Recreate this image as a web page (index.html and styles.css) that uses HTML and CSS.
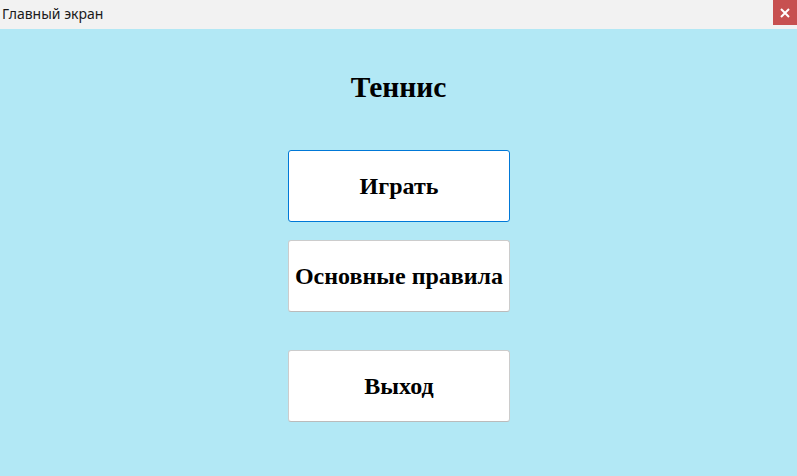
FILE: index.html
```html
<!DOCTYPE html>
<html lang="ru">
<head>
<meta charset="utf-8">
<title>Главный экран</title>
<link rel="stylesheet" href="styles.css">
</head>
<body>
<div class="window">
  <header class="titlebar">
    <span class="title">Главный экран</span>
    <button class="close" aria-label="Закрыть">
      <svg width="10" height="10" viewBox="0 0 10 10"><path d="M1 1L9 9M9 1L1 9" stroke="#fff" stroke-width="2"/></svg>
    </button>
  </header>
  <main class="content">
    <h1 class="heading">Теннис</h1>
    <button class="menu-btn focused">Играть</button>
    <button class="menu-btn second">Основные правила</button>
    <button class="menu-btn third">Выход</button>
  </main>
</div>
</body>
</html>
```
FILE: styles.css
```css
html, body {
  margin: 0;
  padding: 0;
  height: 100%;
}
.window {
  display: flex;
  flex-direction: column;
  height: 476px;
  width: 797px;
  overflow: hidden;
}
.titlebar {
  height: 29px;
  background: #f2f2f2;
  display: flex;
  align-items: flex-start;
  justify-content: space-between;
  flex: none;
}
.title {
  font-family: "Segoe UI", "Noto Sans", "Open Sans", sans-serif;
  font-size: 14px;
  color: #1a1a1a;
  padding-left: 2px;
  line-height: 29px;
  margin-top: -1px;
}
.close {
  width: 24px;
  height: 25px;
  border: none;
  padding: 0;
  margin: 0;
  background: #c75050;
  display: flex;
  align-items: center;
  justify-content: center;
}
.content {
  flex: 1;
  background: #b2e8f5;
  display: flex;
  flex-direction: column;
  align-items: center;
}
.heading {
  font-family: "Liberation Serif", serif;
  font-weight: bold;
  font-size: 29.5px;
  line-height: 32px;
  margin: 42px 0 0 0;
  color: #000;
}
.menu-btn {
  width: 222px;
  height: 72px;
  background: #fff;
  border: 1px solid #cccccc;
  border-bottom-color: #bbbbbb;
  border-radius: 3px;
  font-family: "Liberation Serif", serif;
  font-weight: bold;
  font-size: 24px;
  color: #000;
  padding: 0;
  margin-left: 1px;
  white-space: nowrap;
}
.focused {
  border-color: #0078d7;
  margin-top: 47px;
}
.second {
  margin-top: 18px;
}
.third {
  margin-top: 38px;
}
```
